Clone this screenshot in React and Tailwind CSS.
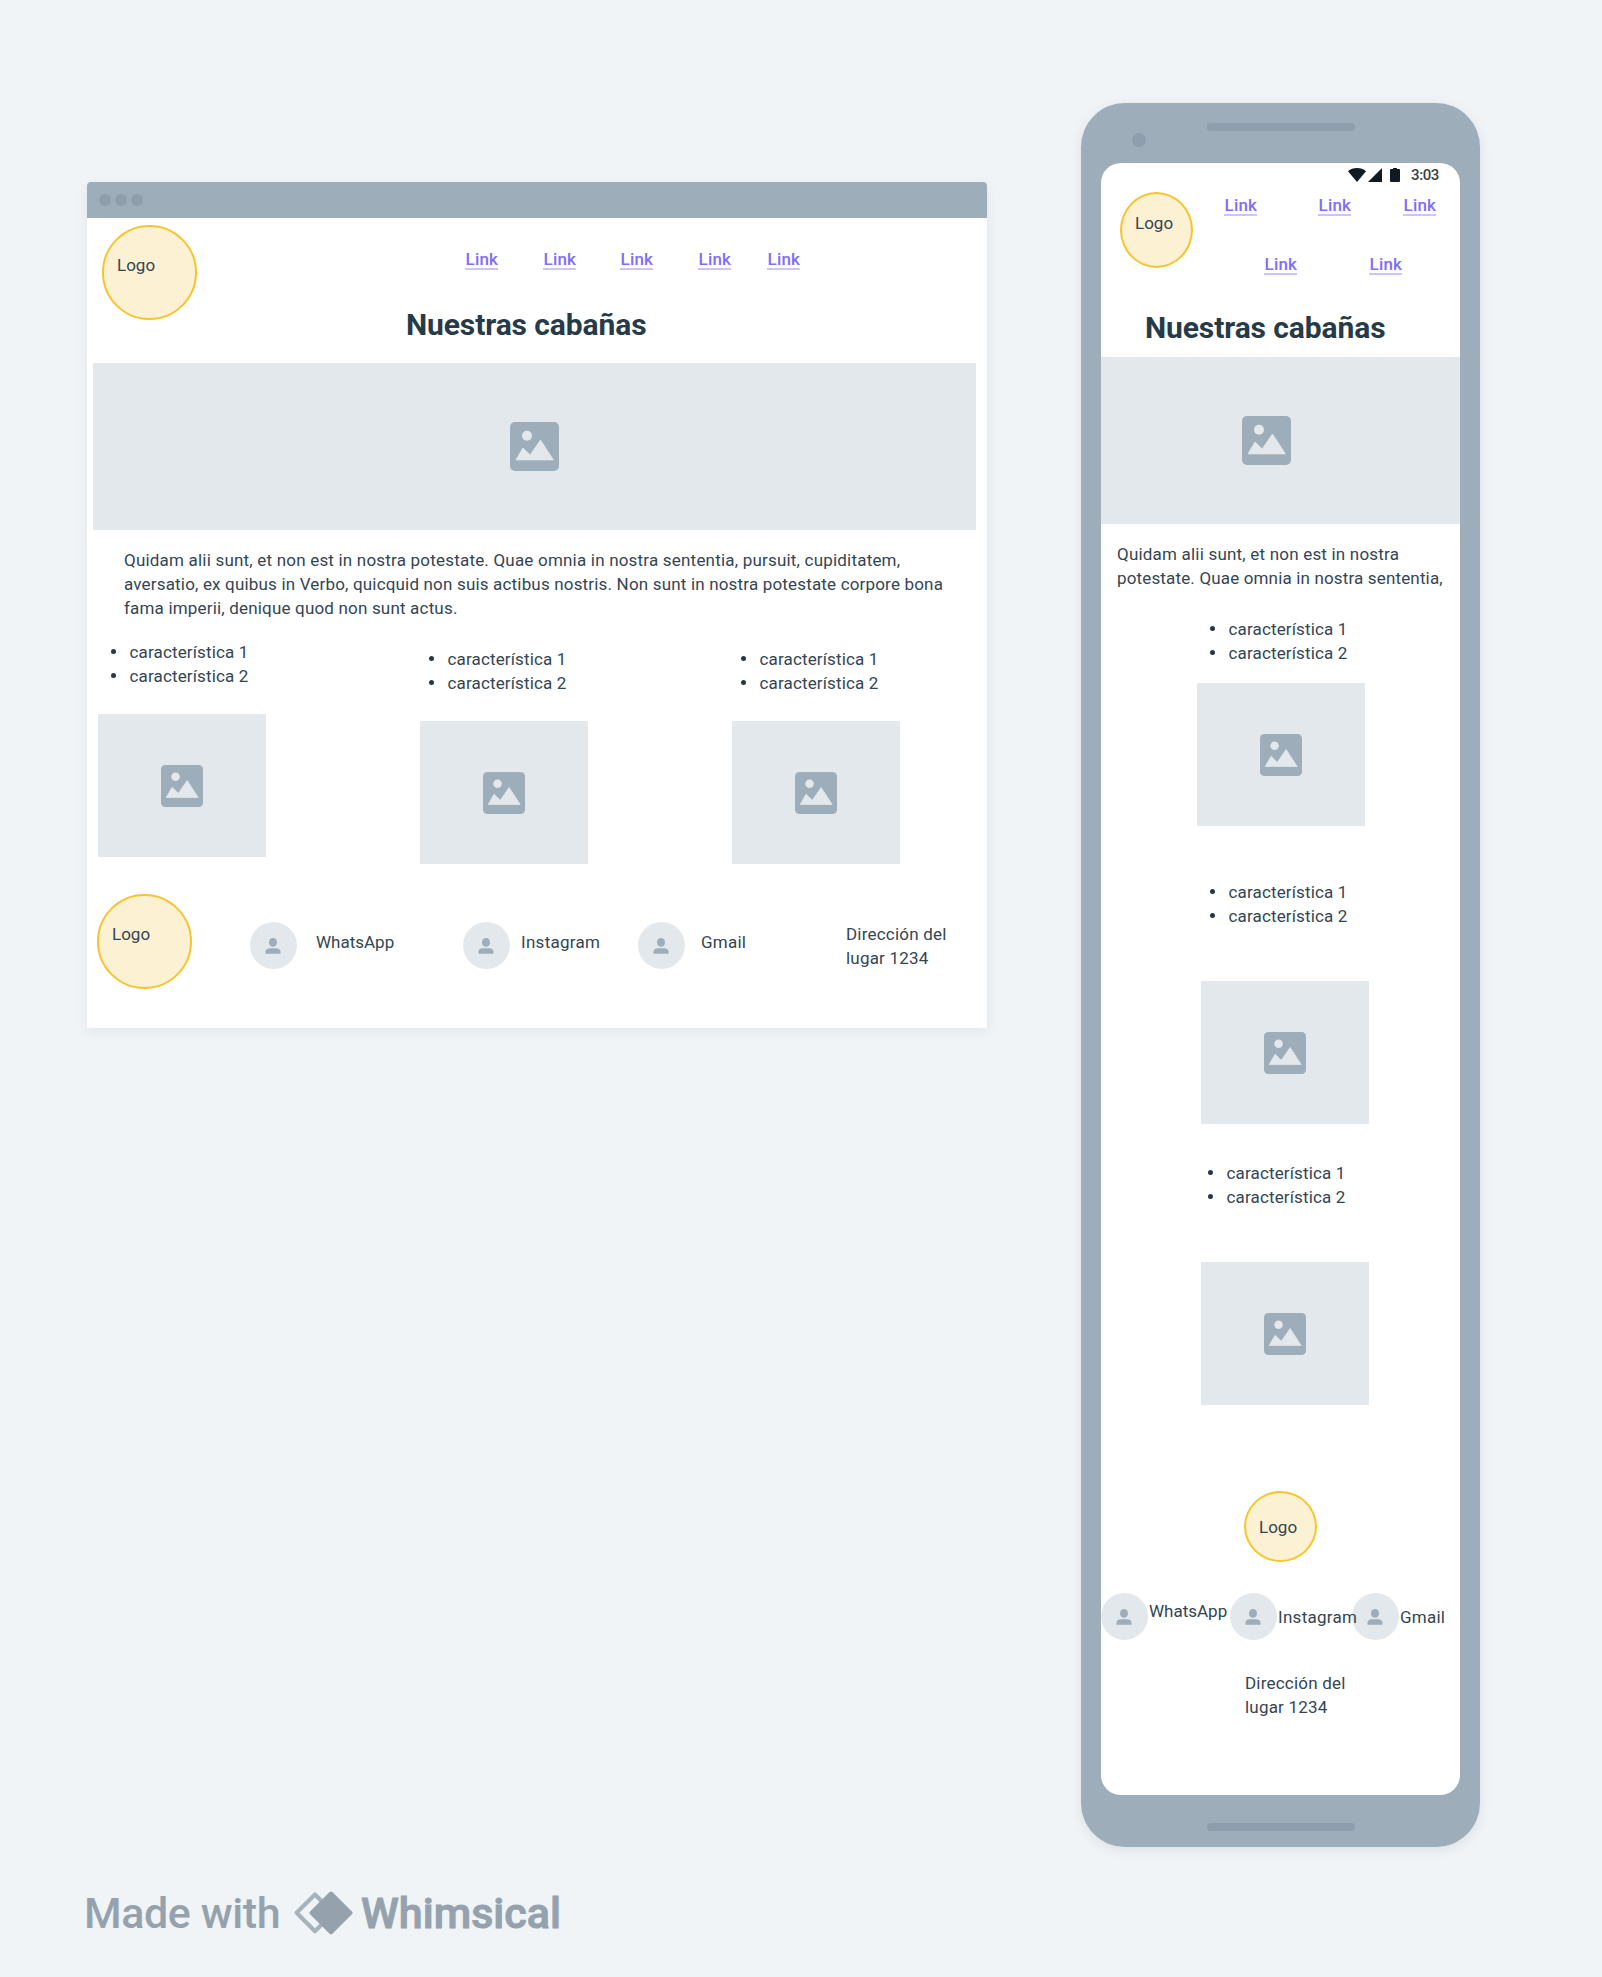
import React from 'react';
import clsx from 'clsx';

function Link({ className }) {
  return (
    <a className={clsx('block h-[23px] w-[33px] whitespace-nowrap border-b-2 border-[#cac3fc] pl-[0.5px] font-medium leading-[24px] tracking-[0.2px] text-[#7f6ef7]', className)}>
      Link
    </a>
  );
}

function ImageIcon({ className }) {
  return (
    <svg viewBox="0 0 49 49" className={clsx('shrink-0', className)}>
      <rect width="49" height="49" rx="5" fill="#9eadba" />
      <circle cx="17" cy="13.7" r="5" fill="#e3e8ec" />
      <path
        d="M6 37.9 12.9 26 20.2 32.9 30.5 18 43.4 37.9Z"
        fill="#e3e8ec"
        stroke="#e3e8ec"
        strokeWidth="0.8"
        strokeLinejoin="round"
      />
    </svg>
  );
}

function Thumb({ className }) {
  return (
    <div className={clsx('flex h-[143px] w-[168px] items-center justify-center bg-[#e3e8ec] pr-px', className)}>
      <ImageIcon className="size-[42px]" />
    </div>
  );
}

function Features({ className }) {
  return (
    <ul className={clsx('h-[47px]', className)}>
      {['característica 1', 'característica 2'].map((label) => (
        <li key={label} className="flex h-[23.67px] items-start gap-[13.5px] whitespace-nowrap leading-[23.67px] tracking-[0.15px]">
          <span className="mt-[8px] size-[5px] rounded-full bg-[#273746]" />
          {label}
        </li>
      ))}
    </ul>
  );
}

function Avatar({ className }) {
  return (
    <span className={clsx('flex size-[47px] shrink-0 items-center justify-center rounded-full bg-[#e3e8ec] pr-px', className)}>
      <svg viewBox="0 0 16 16" className="size-4" fill="#9eadba">
        <ellipse cx="8" cy="4.4" rx="4" ry="4.3" />
        <path d="M0.5 15.8V13.6C0.5 11.4 2.6 10.2 5 10.2H11C13.4 10.2 15.5 11.4 15.5 13.6V15.8Z" />
      </svg>
    </span>
  );
}

function Logo({ className }) {
  return (
    <div className={clsx('shrink-0 rounded-[50%] border-2 border-[#f6c42c] bg-[#fdf1d3] leading-[24px]', className)}>Logo</div>
  );
}

function Title({ className }) {
  return (
    <h1 className={clsx('whitespace-nowrap text-[30px] font-bold leading-[36px] tracking-[-0.1px] text-[#273a48]', className)}>
      Nuestras cabañas
    </h1>
  );
}

function BrowserMockup() {
  return (
    <section className="ml-[87px] mt-[182px] h-[846px] w-[900px] shrink-0 rounded-t-[4px] bg-white shadow-[0_3px_12px_rgba(39,58,72,0.08)]">
      <div className="flex h-[36px] items-center gap-1 rounded-t-[4px] bg-[#9eadba] pl-3">
        <span className="size-3 rounded-full bg-[#8e9ead]" />
        <span className="size-3 rounded-full bg-[#8e9ead]" />
        <span className="size-3 rounded-full bg-[#8e9ead]" />
      </div>

      <header className="flex h-[145px]">
        <Logo className="ml-[15px] mt-[7px] size-[95px] pl-[13px] pt-[26px]" />
        <div className="pt-[29px]">
          <nav className="ml-[268px] flex">
            <Link />
            <Link className="ml-[45px]" />
            <Link className="ml-[44px]" />
            <Link className="ml-[45px]" />
            <Link className="ml-[36px]" />
          </nav>
          <Title className="ml-[209px] mt-[37px]" />
        </div>
      </header>

      <div className="ml-[6px] flex h-[167px] w-[883px] items-center justify-center bg-[#e3e8ec]">
        <ImageIcon className="size-[49px]" />
      </div>

      <p className="ml-[37px] h-[90px] whitespace-nowrap pt-[19.4px] leading-[23.67px]">
        <span className="block tracking-[0.2px]">
          Quidam alii sunt, et non est in nostra potestate. Quae omnia in nostra sententia, pursuit, cupiditatem,
        </span>
        <span className="block tracking-[0.175px]">
          aversatio, ex quibus in Verbo, quicquid non suis actibus nostris. Non sunt in nostra potestate corpore bona
        </span>
        <span className="block tracking-[0.18px]">fama imperii, denique quod non sunt actus.</span>
      </p>

      <div className="ml-[11px] flex items-start pt-[21px]">
        <div>
          <Features className="ml-[13px]" />
          <Thumb className="mt-[26px]" />
        </div>
        <div className="ml-[154px] mt-[7px]">
          <Features className="ml-[9px]" />
          <Thumb className="mt-[26px]" />
        </div>
        <div className="ml-[144px] mt-[7px]">
          <Features className="ml-[9px]" />
          <Thumb className="mt-[26px]" />
        </div>
      </div>

      <footer className="flex items-start whitespace-nowrap leading-[24px]">
        <Logo className="ml-[10px] mt-[30px] size-[95px] pl-[13px] pt-[26px]" />
        <Avatar className="ml-[58px] mt-[58px]" />
        <span className="ml-[19px] mt-[66px] w-[79px]">WhatsApp</span>
        <Avatar className="ml-[68px] mt-[58px]" />
        <span className="ml-[11px] mt-[66px] w-[79px] tracking-[0.28px]">Instagram</span>
        <Avatar className="ml-[38px] mt-[58px]" />
        <span className="ml-[16px] mt-[66px] w-[47px] tracking-[0.25px]">Gmail</span>
        <address className="ml-[98px] mt-[59.4px] not-italic leading-[23.67px] tracking-[0.2px]">
          Dirección del
          <br />
          lugar 1234
        </address>
      </footer>
    </section>
  );
}

function StatusBar() {
  return (
    <div className="flex h-[29px] items-start pl-[247px]">
      <svg viewBox="0 0 18 14" className="mt-[5px] h-[14px] w-[18px]" fill="#101a21">
        <path d="M9 14 0 3.2C2.4 1.2 5.5 0 9 0S15.600 1.200 18 3.200Z" />
      </svg>
      <svg viewBox="0 0 14 14" className="ml-[2px] mt-[5px] size-[14px]" fill="#101a21">
        <path d="M0 14 14 0V14Z" />
      </svg>
      <svg viewBox="0 0 10 14" className="ml-[8px] mt-[5px] h-[14px] w-[10px]" fill="#101a21">
        <path d="M3 0H7V1H9Q10 1 10 2V13Q10 14 9 14H1Q0 14 0 13V2Q0 1 1 1H3Z" />
      </svg>
      <span className="ml-[11px] mt-[3px] text-[15px] font-medium leading-[18px] tracking-[-0.4px] text-[#3a3f45]">3:03</span>
    </div>
  );
}

function PhoneMockup() {
  return (
    <section className="ml-[94px] mt-[103px] h-[1744px] w-[399px] shrink-0 rounded-[44px] bg-[#9eadba] shadow-[0_3px_12px_rgba(39,58,72,0.1)]">
      <div className="flex h-[60px] items-start">
        <span className="ml-[51px] mt-[30px] size-[14px] rounded-full bg-[#8e9ead]" />
        <span className="ml-[61px] mt-[20px] h-[8px] w-[148px] rounded-full bg-[#8e9ead]" />
      </div>

      <div className="mx-5 h-[1631.500px] rounded-[20px] bg-white">
        <StatusBar />

        <header className="flex h-[165px] items-start">
          <Logo className="ml-[19px] h-[76px] w-[73px] pl-[13px] pt-[17px]" />
          <div className="pt-px">
            <nav>
              <div className="flex">
                <Link className="ml-[31px]" />
                <Link className="ml-[61px]" />
                <Link className="ml-[52px]" />
              </div>
              <div className="mt-[36px] flex">
                <Link className="ml-[71px]" />
                <Link className="ml-[72px]" />
              </div>
            </nav>
            <Title className="-ml-[48px] mt-[35px]" />
          </div>
        </header>

        <div className="flex h-[167px] items-center bg-[#e3e8ec] pl-[141px]">
          <ImageIcon className="size-[49px]" />
        </div>

        <p className="h-[66px] whitespace-nowrap pl-[16px] pt-[19px] leading-[23.67px]">
          <span className="block tracking-[0.2px]">Quidam alii sunt, et non est in nostra</span>
          <span className="block tracking-[0.155px]">potestate. Quae omnia in nostra sententia,</span>
        </p>

        <Features className="ml-[109px] mt-[28px]" />
        <Thumb className="ml-[96px] mt-[18px]" />
        <Features className="ml-[109px] mt-[55px]" />
        <Thumb className="ml-[100px] mt-[53px]" />
        <Features className="ml-[107px] mt-[38px]" />
        <Thumb className="ml-[100px] mt-[53px]" />

        <footer className="whitespace-nowrap leading-[24px]">
          <Logo className="ml-[143px] mt-[86px] h-[71px] w-[73px] pl-[13px] pt-[22px]" />
          <div className="mt-[31px] flex items-start">
            <Avatar />
            <span className="ml-px mt-[6px] w-[81px]">WhatsApp</span>
            <Avatar />
            <span className="z-10 mt-[12px] w-[75px] pl-px tracking-[0.28px]">Instagram</span>
            <Avatar />
            <span className="mt-[12px] pl-px tracking-[0.25px]">Gmail</span>
          </div>
          <address className="ml-[144px] mt-[32.4px] not-italic leading-[23.67px] tracking-[0.2px]">
            Dirección del
            <br />
            lugar 1234
          </address>
        </footer>
      </div>

      <div className="pl-[126px] pt-[28.500px]">
        <div className="h-[8px] w-[148px] rounded-full bg-[#8e9ead]" />
      </div>
    </section>
  );
}

function Watermark() {
  return (
    <div className="flex items-start whitespace-nowrap pl-[83px] text-[43px] leading-[50px] text-[#95a2ad]">
      <span className="w-[210px] pl-[1px] font-medium tracking-[-0.4px]">Made with</span>
      <svg viewBox="0 0 60 44" className="mt-[3px] h-[44px] w-[60px]">
        <path d="M22 3.500 40 21.800 22 40.200 3.600 21.800Z" fill="none" stroke="#a8b4bd" strokeWidth="4.200" strokeLinejoin="round" />
        <path d="M38 2.500 57.500 21.800 38 41.300 18.500 21.800Z" fill="#95a2ad" stroke="#95a2ad" strokeWidth="4" strokeLinejoin="round" />
      </svg>
      <span className="ml-[8px] font-medium [-webkit-text-stroke:1px_#95a2ad]">Whimsical</span>
    </div>
  );
}

export default function App() {
  return (
    <div className="h-[1977px] w-[1602px] overflow-hidden bg-[#f0f4f7] font-['Roboto',sans-serif] text-[17px] text-[#344553]">
      <main className="flex h-[1888px] items-start">
        <BrowserMockup />
        <PhoneMockup />
      </main>
      <Watermark />
    </div>
  );
}
